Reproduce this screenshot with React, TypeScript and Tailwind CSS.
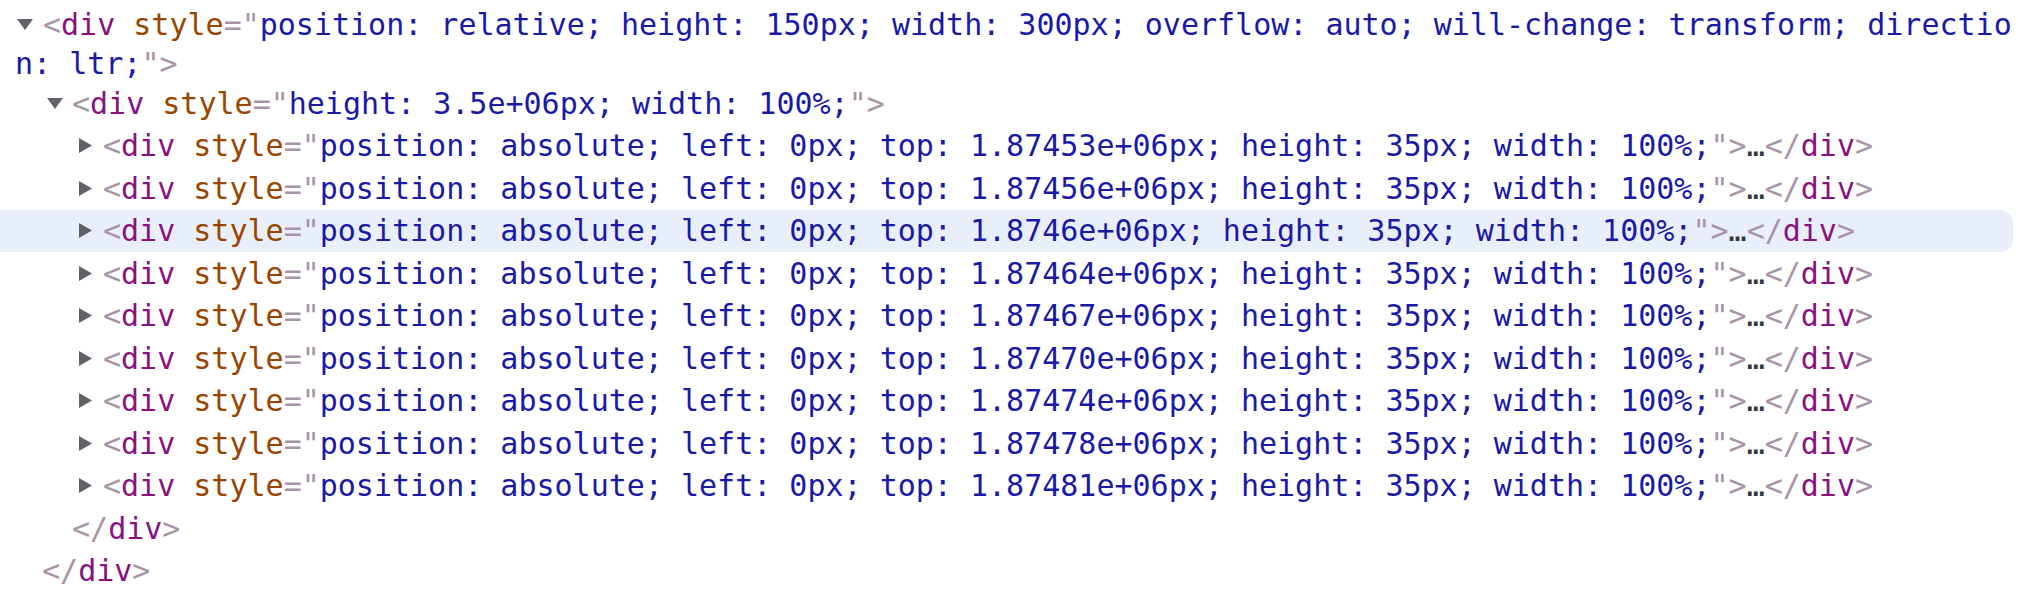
import React from "react";

const Down = () => (
  <svg width="16" height="11" viewBox="0 0 16 11" className="shrink-0">
    <polygon points="0,0 16,0 8,11" fill="#5f6368" />
  </svg>
);

const Right = () => (
  <svg width="13" height="15" viewBox="0 0 13 15" className="shrink-0">
    <polygon points="0,0 13,7.5 0,15" fill="#5f6368" />
  </svg>
);

const Br = ({ children }: { children: React.ReactNode }) => (
  <span className="text-[#a894a6]">{children}</span>
);
const Tag = ({ children }: { children: React.ReactNode }) => (
  <span className="text-[#881280]">{children}</span>
);
const Attr = ({ children }: { children: React.ReactNode }) => (
  <span className="text-[#994500]">{children}</span>
);
const Val = ({ children }: { children: React.ReactNode }) => (
  <span className="text-[#1a1aa6]">{children}</span>
);

const tops = [
  "1.87453e+06px",
  "1.87456e+06px",
  "1.8746e+06px",
  "1.87464e+06px",
  "1.87467e+06px",
  "1.87470e+06px",
  "1.87474e+06px",
  "1.87478e+06px",
  "1.87481e+06px",
];

export default function App() {
  return (
    <div className="w-[2022px] h-[594px] overflow-hidden bg-white pt-[5px] font-['DejaVu_Sans_Mono',monospace] text-[30px] whitespace-pre">
      <div className="flex items-center h-[39px] pl-[17px]">
        <Down />
        <span className="ml-[10px]">
          <Br>&lt;</Br>
          <Tag>div</Tag> <Attr>style</Attr>
          <Br>="</Br>
          <Val>position: relative; height: 150px; width: 300px; overflow: auto; will-change: transform; directio</Val>
        </span>
      </div>
      <div className="flex items-center h-[38px] pl-[15px]">
        <span>
          <Val>n: ltr;</Val>
          <Br>"&gt;</Br>
        </span>
      </div>
      <div className="flex items-center h-[42.5px] pl-[47px]">
        <Down />
        <span className="ml-[9px]">
          <Br>&lt;</Br>
          <Tag>div</Tag> <Attr>style</Attr>
          <Br>="</Br>
          <Val>height: 3.5e+06px; width: 100%;</Val>
          <Br>"&gt;</Br>
        </span>
      </div>
      {tops.map((t, i) => (
        <div
          key={t}
          className={
            "flex items-center h-[42.5px] pl-[79px] mr-[9px] rounded-r-[12px] " +
            (i === 2 ? "bg-[#e9effa]" : "")
          }
        >
          <Right />
          <span className="ml-[11px]">
            <Br>&lt;</Br>
            <Tag>div</Tag> <Attr>style</Attr>
            <Br>="</Br>
            <Val>{`position: absolute; left: 0px; top: ${t}; height: 35px; width: 100%;`}</Val>
            <Br>"&gt;</Br>
            <span className="text-[#303942]">…</span>
            <Br>&lt;/</Br>
            <Tag>div</Tag>
            <Br>&gt;</Br>
          </span>
        </div>
      ))}
      <div className="flex items-center h-[42.5px] pl-[72px]">
        <span>
          <Br>&lt;/</Br>
          <Tag>div</Tag>
          <Br>&gt;</Br>
        </span>
      </div>
      <div className="flex items-center h-[42.5px] pl-[42px]">
        <span>
          <Br>&lt;/</Br>
          <Tag>div</Tag>
          <Br>&gt;</Br>
        </span>
      </div>
    </div>
  );
}
